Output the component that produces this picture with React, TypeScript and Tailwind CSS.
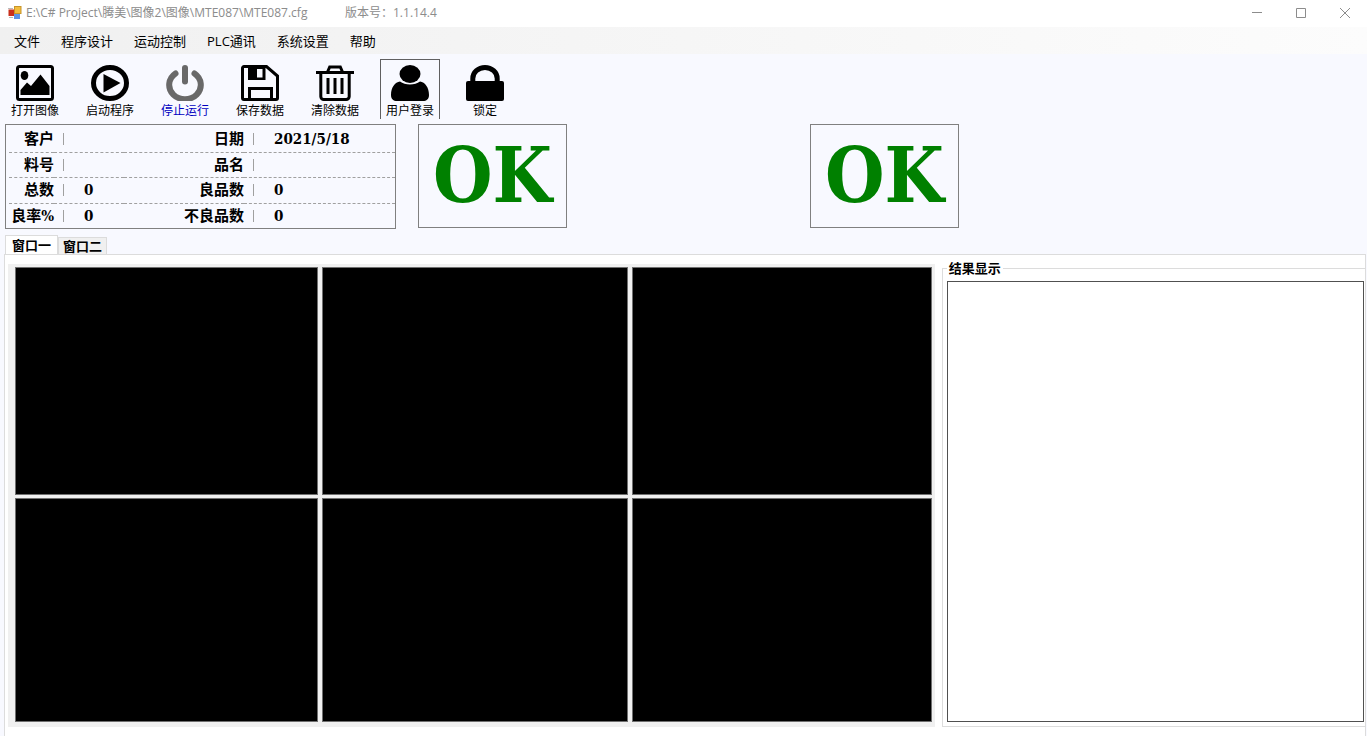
import { useState } from 'react';
import type { ReactNode } from 'react';
import clsx from 'clsx';

const menus = ['文件', '程序设计', '运动控制', 'PLC通讯', '系统设置', '帮助'];

const tools: { label: string; icon: ReactNode; muted?: boolean; boxed?: boolean }[] = [
  {
    label: '打开图像',
    icon: (
      <>
        <rect x="1.5" y="1.5" width="35" height="33" rx="2" fill="none" stroke="currentColor" strokeWidth="3" />
        <ellipse cx="8.5" cy="10.5" rx="3.8" ry="4.5" />
        <path d="M4.5 30v-5l6.5-7.5 4 3.5L24.5 9.5 33.5 21v9z" />
      </>
    ),
  },
  {
    label: '启动程序',
    icon: (
      <>
        <ellipse cx="19" cy="18" rx="16.5" ry="15.5" fill="none" stroke="currentColor" strokeWidth="5" />
        <path d="M12.5 9v18.5L29.5 18z" />
      </>
    ),
  },
  {
    label: '停止运行',
    muted: true,
    icon: (
      <g fill="none" stroke="currentColor" strokeWidth="6" strokeLinecap="round">
        <path d="M9.5 8.5A15.8 14.3 0 1 0 28.500 8.5" />
        <path d="M19 3v13.5" />
      </g>
    ),
  },
  {
    label: '保存数据',
    icon: (
      <>
        <path d="M3 1.5h22.5L36.5 11v22a1.5 1.5 0 0 1-1.5 1.5H3A1.5 1.5 0 0 1 1.5 33V3A1.5 1.5 0 0 1 3 1.5z" fill="none" stroke="currentColor" strokeWidth="3" />
        <path fillRule="evenodd" d="M7 1h17.5v14H7zM16 4v8.5h5.5V4z" />
        <path d="M8.5 35V23.5h22V35" fill="none" stroke="currentColor" strokeWidth="3" />
      </>
    ),
  },
  {
    label: '清除数据',
    icon: (
      <g fill="none" stroke="currentColor" strokeWidth="3">
        <path d="M0 7.5h38" />
        <path d="M11.5 7l2.2-5h10.6l2.2 5" />
        <path d="M4.8 8v23.5a3 3 0 0 0 3 3h22.4a3 3 0 0 0 3-3V8" />
        <path d="M12 13v16M19 13v16M26 13v16" />
      </g>
    ),
  },
  {
    label: '用户登录',
    boxed: true,
    icon: (
      <>
        <ellipse cx="19" cy="9" rx="10.5" ry="9" />
        <path d="M9 16.5c5 4 15 4 20 0 5 .5 9 6 9 13.5 0 4-2.5 6-6 6H6c-3.5 0-6-2-6-6 0-7.5 4-13 9-13.5z" />
      </>
    ),
  },
  {
    label: '锁定',
    icon: (
      <>
        <path d="M6.8 18v-4.5a12.2 11 0 0 1 24.4 0V18" fill="none" stroke="currentColor" strokeWidth="5" />
        <rect x="0" y="16" width="38" height="20" rx="2" />
      </>
    ),
  },
];

const stats = [
  ['客户', '', '日期', '2021/5/18'],
  ['料号', '', '品名', ''],
  ['总数', '0', '良品数', '0'],
  ['良率%', '0', '不良品数', '0'],
];

const tabs = ['窗口一', '窗口二'];

function TitleBar() {
  return (
    <header className="flex h-[27px] items-center bg-white pb-[2px] pl-2 text-xs text-[#8c8c8c]">
      <svg width="14" height="14" viewBox="0 0 14 14" className="mr-1 shrink-0">
        <rect x="0.5" y="3.5" width="6" height="6.5" fill="#c9301c" />
        <rect x="6.5" y="0.5" width="6.5" height="7" fill="#f3bd3c" stroke="#c7952a" />
        <rect x="6" y="8" width="6" height="5" fill="#5b93e6" />
        <path d="M0 2.5h5M1 11.5h4" stroke="#b9b9b9" />
      </svg>
      <h1 className="w-[319px] whitespace-nowrap">E:\C# Project\腾美\图像2\图像\MTE087\MTE087.cfg</h1>
      <span className="whitespace-nowrap">版本号：1.1.14.4</span>
      <div className="ml-auto flex h-full">
        <button type="button" aria-label="最小化" className="flex w-11 items-center justify-center">
          <svg width="10" height="10" stroke="#8c8c8c"><path d="M0 4.5h10" /></svg>
        </button>
        <button type="button" aria-label="最大化" className="flex w-11 items-center justify-center">
          <svg width="10" height="10" fill="none" stroke="#8c8c8c"><path d="M.5.5h9v9h-9z" /></svg>
        </button>
        <button type="button" aria-label="关闭" className="flex w-11 items-center justify-center">
          <svg width="10" height="10" stroke="#8c8c8c"><path d="M0 0l10 10M10 0L0 10" /></svg>
        </button>
      </div>
    </header>
  );
}

function Result() {
  return (
    <div className="flex h-[104px] w-[149px] items-center justify-center border border-[#808080] font-['DejaVu_Serif_Condensed','DejaVu_Serif',serif] text-[76px] leading-none font-bold text-[#008000]">
      OK
    </div>
  );
}

export default function App() {
  const [tab, setTab] = useState(0);

  return (
    <div className="flex min-h-screen flex-col bg-[#f8f9ff] font-['Open_Sans','Noto_Sans_CJK_SC',sans-serif] text-black">
      <TitleBar />

      <nav className="flex h-[27px] items-center gap-[21px] bg-linear-to-r from-[#f0f0f0] to-[#fcfcfc] pt-[2px] pl-[14px] text-[13px]">
        {menus.map((m) => (
          <button key={m} type="button">{m}</button>
        ))}
      </nav>

      <div className="flex h-[70px] gap-[15px] pt-[5px] pl-[5px]">
        {tools.map((t) => (
          <button
            key={t.label}
            type="button"
            className={clsx(
              'flex h-[60px] w-[60px] flex-col items-center border border-b-0 pt-[5px]',
              t.boxed ? 'border-[#606060]' : 'border-transparent'
            )}
          >
            <svg width="38" height="36" viewBox="0 0 38 36" fill="currentColor" className={t.muted ? 'shrink-0 text-[#696969]' : 'shrink-0'}>
              {t.icon}
            </svg>
            <span className={clsx('text-xs leading-5 whitespace-nowrap', t.muted && 'text-[#0000c0]')}>{t.label}</span>
          </button>
        ))}
      </div>

      <section className="flex pl-[5px]">
        <table className="h-[105px] w-[391px] table-fixed border-separate border-spacing-0 border border-[#808080] pt-[2px] pl-[3px] font-['DejaVu_Serif_Condensed','Noto_Sans_CJK_SC',sans-serif] text-[15px] leading-5 font-bold">
          <tbody>
            {stats.map((row, r) => (
              <tr key={row[0]}>
                {row.map((cell, c) =>
                  c % 2 === 0 ? (
                    <th
                      key={c}
                      scope="row"
                      className={clsx('p-0 text-right whitespace-nowrap', c === 0 ? 'w-[45px]' : 'w-[120px]', r < 3 && 'border-b border-dashed border-[#a0a0a0]')}
                    >
                      {cell}
                    </th>
                  ) : (
                    <td key={c} className={clsx('p-0', c === 1 && 'w-[70px]', r < 3 && 'border-b border-dashed border-[#a0a0a0]')}>
                      <div className="ml-[9px] flex h-5 items-center">
                        <span className="h-3 w-px bg-[#a0a0a0]" />
                        <span className="pl-5">{cell}</span>
                      </div>
                    </td>
                  )
                )}
              </tr>
            ))}
          </tbody>
        </table>
        <div className="ml-[22px] flex gap-[243px]">
          <Result />
          <Result />
        </div>
      </section>

      <div role="tablist" className="flex h-[25px] items-end pl-[5px] text-[13px] font-bold">
        {tabs.map((t, i) => (
          <button
            key={t}
            type="button"
            role="tab"
            aria-selected={tab === i}
            onClick={() => setTab(i)}
            className={clsx(
              'border border-b-0 border-[#dcdcdc] leading-4 whitespace-nowrap',
              tab === i ? 'h-[19px] bg-white px-[6px]' : 'h-[17px] bg-[#f0f0f0] px-1'
            )}
          >
            {t}
          </button>
        ))}
      </div>

      <main className="mr-px ml-1 grid flex-1 grid-cols-[928fr_424fr] gap-[7px] border border-b-0 border-[#dcdcdc] bg-white pt-[7px] pb-[9px] pl-[3px]">
        <div className="mt-[2px] grid grid-cols-[303fr_306fr_300fr] grid-rows-[228fr_224fr] gap-x-[4px] gap-y-[3px] bg-[#f0f0f0] pt-[3px] pr-[3px] pb-[5px] pl-[7px]">
          {[0, 1, 2, 3, 4, 5].map((n) => (
            <div key={n} className="border border-[#707070] bg-black" />
          ))}
        </div>
        <fieldset className="flex flex-col border border-r-0 border-[#dcdcdc] pr-px pb-1 pl-1">
          <legend className="px-[2px] text-[13px] leading-3 font-bold">结果显示</legend>
          <textarea aria-label="结果显示" readOnly className="mt-[7px] block w-full flex-1 resize-none border border-[#505050] bg-white outline-none" />
        </fieldset>
      </main>
    </div>
  );
}
